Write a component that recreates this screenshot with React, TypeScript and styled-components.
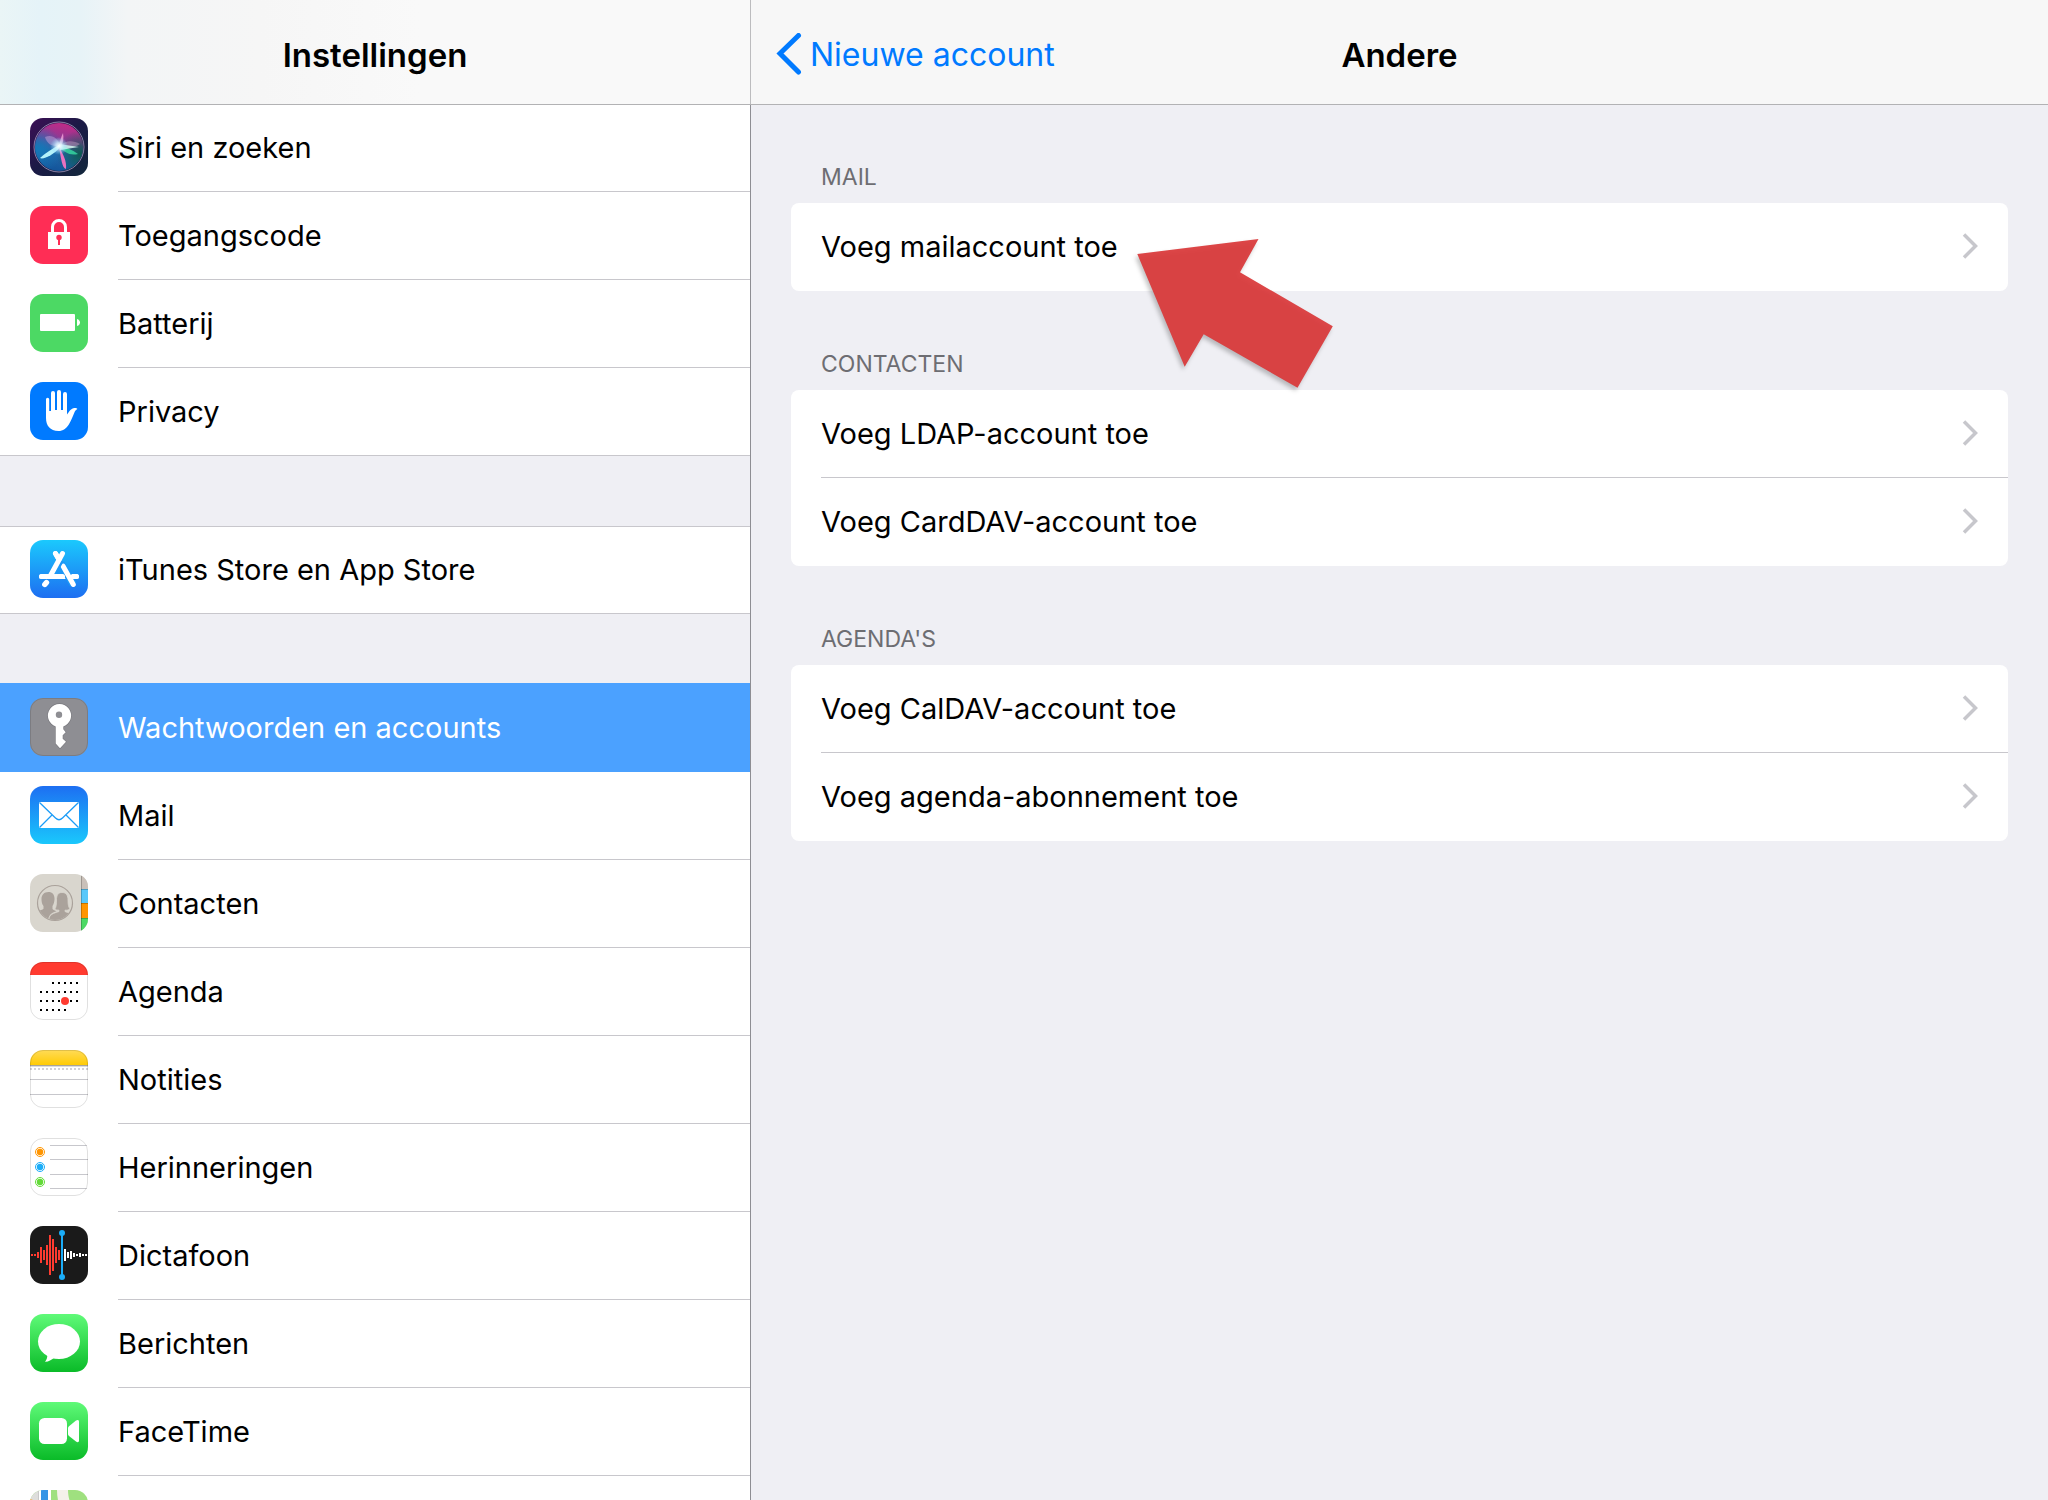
import React from "react";
import styled, { createGlobalStyle, css } from "styled-components";

const GlobalStyle = createGlobalStyle`
  *, *::before, *::after { box-sizing: border-box; }
  body {
    margin: 0;
    background: #efeff4;
    color: #000;
    font-family: Inter, "Liberation Sans", sans-serif;
    font-size: 29px;
    line-height: 36px;
  }
  button { font: inherit; color: inherit; }
  h1, h2, ul { margin: 0; padding: 0; font-weight: inherit; font-size: inherit; }
  ul { list-style: none; }
`;

const Screen = styled.div`
  display: grid;
  grid-template-columns: 751px minmax(0, 1fr);
  height: 100vh;
  overflow: hidden;
`;

const Sidebar = styled.aside`
  display: flex;
  flex-direction: column;
  min-height: 0;
`;

const Main = styled.main`
  display: flex;
  flex-direction: column;
  min-width: 0;
`;

const Bar = styled.header<{ $tinted?: boolean }>`
  position: relative;
  z-index: 1;
  flex: none;
  display: grid;
  grid-template-columns: 1fr auto 1fr;
  align-items: center;
  height: 104px;
  padding: 6px 24px 0;
  box-shadow: 0 1px 0 #b2b2b4;
  background: #f7f7f7;

  ${(p) =>
    p.$tinted &&
    css`
      border-right: 1px solid #bcbcbe;
      background: linear-gradient(90deg, #eaf5f6 0, #e5f3f8 40px, #e7f3f7 80px, #f3f5f6 128px, #f6f6f6 260px, #f9f9f9 420px);
    `}
`;

const Title = styled.h1`
  grid-column: 2;
  font-size: 33px;
  line-height: 40px;
  font-weight: 600;
`;

const BackButton = styled.button`
  justify-self: start;
  display: flex;
  align-items: center;
  gap: 8px;
  padding: 0;
  border: 0;
  background: none;
  color: #007aff;
  font-size: 32px;
  line-height: 40px;
  cursor: pointer;
`;

const SideNav = styled.nav`
  flex: 1;
  min-height: 0;
  overflow: hidden;
  display: flex;
  flex-direction: column;
  gap: 70px;
  border-right: 1px solid #8e8e93;
`;

const SideGroup = styled.ul`
  flex: none;
  background: #fff;
  box-shadow: inset 0 1px 0 #c8c7cc;
`;

const SideLabel = styled.span`
  flex: 1;
  display: flex;
  align-items: center;
  box-shadow: inset 0 -1px 0 #c8c7cc;
`;

const SideRow = styled.button<{ $active?: boolean }>`
  display: flex;
  width: 100%;
  height: 88px;
  padding: 0 0 0 30px;
  gap: 30px;
  border: 0;
  background: none;
  text-align: left;
  cursor: pointer;

  & > svg { flex: none; margin-top: 14px; }

  li:last-child > & {
    box-shadow: inset 0 -1px 0 #c8c7cc;
  }

  ${(p) =>
    p.$active &&
    css`
      background: #4ba1ff;
      color: #fff;
      box-shadow: 0 -1px 0 #4ba1ff;
      ${SideLabel} { box-shadow: none; }
    `}
`;

const Panel = styled.div`
  padding: 0 40px;
`;

const Caption = styled.h2`
  display: flex;
  align-items: flex-end;
  height: 99px;
  padding: 0 30px 12px;
  color: #6d6d72;
  font-size: 23px;
  line-height: 28px;
  text-transform: uppercase;
`;

const Card = styled.ul`
  border-radius: 8px;
  background: #fff;
`;

const CardItem = styled.li`
  position: relative;
  padding-left: 30px;
`;

const CardRow = styled.button`
  display: flex;
  align-items: center;
  justify-content: space-between;
  width: 100%;
  height: 88px;
  padding: 0 30px 0 0;
  border: 0;
  background: none;
  text-align: left;
  cursor: pointer;

  li:not(:last-child) > & {
    box-shadow: inset 0 -1px 0 #c8c7cc;
  }
`;

const Pointer = styled.svg`
  position: absolute;
  left: 339px;
  top: 28px;
  pointer-events: none;
  filter: drop-shadow(-2px 3px 2px rgba(0, 0, 0, 0.25));
`;

function AppIcon({ id, fill, children, outlined }: { id: string; fill: string; outlined?: boolean; children: React.ReactNode }) {
  return (
    <svg width="58" height="58" viewBox="0 0 58 58" aria-hidden="true">
      <clipPath id={`${id}-clip`}>
        <rect width="58" height="58" rx="13" />
      </clipPath>
      <g clipPath={`url(#${id}-clip)`}>
        <rect width="58" height="58" fill={fill} />
        {children}
      </g>
      {outlined && <rect x=".5" y=".5" width="57" height="57" rx="12.5" fill="none" stroke="#000" strokeOpacity=".12" />}
    </svg>
  );
}

function Fade({ id, from, to }: { id: string; from: string; to: string }) {
  return (
    <linearGradient id={id} x1="0" y1="0" x2="0" y2="1">
      <stop offset="0" stopColor={from} />
      <stop offset="1" stopColor={to} />
    </linearGradient>
  );
}

const SiriIcon = () => (
  <AppIcon id="siri" fill="url(#siri-bg)">
    <defs>
      <linearGradient id="siri-bg" x1="0" y1="0" x2="1" y2="1">
        <stop offset="0" stopColor="#3c0f55" />
        <stop offset=".5" stopColor="#1a1a45" />
        <stop offset="1" stopColor="#12283c" />
      </linearGradient>
      <linearGradient id="siri-orb" x1=".6" y1="0" x2=".4" y2="1">
        <stop offset="0" stopColor="#c22a86" />
        <stop offset=".35" stopColor="#8a3a95" />
        <stop offset=".6" stopColor="#2467a8" />
        <stop offset="1" stopColor="#12549a" />
      </linearGradient>
      <radialGradient id="siri-green" cx=".95" cy=".65" r=".5">
        <stop offset="0" stopColor="#0d5a50" />
        <stop offset="1" stopColor="#0d5a50" stopOpacity="0" />
      </radialGradient>
      <radialGradient id="siri-blue" cx=".08" cy=".55" r=".5">
        <stop offset="0" stopColor="#1478b8" />
        <stop offset="1" stopColor="#1478b8" stopOpacity="0" />
      </radialGradient>
      <radialGradient id="siri-glow">
        <stop offset="0" stopColor="#fff" />
        <stop offset=".35" stopColor="#d6f4ff" stopOpacity=".8" />
        <stop offset="1" stopColor="#7fd4ff" stopOpacity="0" />
      </radialGradient>
    </defs>
    <circle cx="29" cy="29" r="24" fill="url(#siri-orb)" />
    <circle cx="29" cy="29" r="24" fill="url(#siri-green)" />
    <circle cx="29" cy="29" r="24" fill="url(#siri-blue)" />
    <path d="M15 19c7-3 13 1 15 9-8 1-13-2-15-9z" fill="#c6a4dc" opacity=".5" />
    <path d="M30 28c5-6 13-6 20-2-5 4-13 5-20 2z" fill="#b78fb8" opacity=".55" />
    <path d="M29 28c1-5 2-9 4-13 1 5 0 10-2 14z" fill="#f6a8dc" opacity=".8" />
    <path d="M29 28c7 1 14 4 19 8-8 2-15-2-19-8z" fill="#35d6a0" opacity=".85" />
    <path d="M29 27c-7 4-14 8-19 13 3 2 14-3 20-11z" fill="#b4f1fa" />
    <path d="M29 29c4 7 8 14 7 22-4-1-5-11-7-22z" fill="#e972c0" />
    <path d="M29 26l20 3-19 3z" fill="#d7fff4" opacity=".8" />
    <circle cx="29" cy="28" r="9" fill="url(#siri-glow)" />
    <circle cx="29" cy="29" r="25" fill="none" stroke="#b9a9cf" strokeOpacity=".7" />
  </AppIcon>
);

const LockIcon = () => (
  <AppIcon id="lock" fill="#ff2d55">
    <path d="M22.500 27v-6a6.500 6.500 0 0 1 13 0v6" fill="none" stroke="#fff" strokeWidth="3" />
    <rect x="18" y="26" width="22" height="17" fill="#fff" />
    <circle cx="29" cy="31.500" r="2.700" fill="#ff2d55" />
    <rect x="28" y="32" width="2" height="7" fill="#ff2d55" />
  </AppIcon>
);

const BatteryIcon = () => (
  <AppIcon id="battery" fill="#4cd964">
    <rect x="10" y="20" width="35" height="17" rx="1" fill="#fff" />
    <path d="M47 25c4 1 4 6 0 7z" fill="#fff" />
  </AppIcon>
);

const HandIcon = () => (
  <AppIcon id="hand" fill="#007aff">
    <path
      fill="#fff"
      d="M16 17.300a1.600 1.600 0 0 1 3.200 0V29h1.800V11a2 2 0 0 1 4 0v17h2V10a2 2 0 0 1 4 0v18h2V12a2 2 0 0 1 4 0v20.500c2-2.500 4-6.500 7.500-6.500 1.500 0 3 .5 2.900 1-1.500.8-2.400 2-3.100 3.700C41 38 38 49 28.500 49 20 49 16 43.500 16 36z"
    />
  </AppIcon>
);

const AppStoreIcon = () => (
  <AppIcon id="store" fill="url(#store-bg)">
    <defs>
      <Fade id="store-bg" from="#1bc9fd" to="#1d6ef1" />
    </defs>
    <g fill="none" stroke="#fff" strokeWidth="5" strokeLinecap="round">
      <path d="M11.500 36.500h35" />
      <path d="M25.500 13.500L29 19.500" />
      <path d="M16.500 42.500L14.800 44.500" strokeWidth="5.400" />
      <path d="M31 23.500L43.300 44.500" stroke="#1c98f7" strokeWidth="7.500" strokeLinecap="butt" />
      <path d="M43 36.500h3.500M33 26L43.300 44.500" />
      <path d="M30.500 20L22.500 34" stroke="#1c98f7" strokeWidth="7" strokeLinecap="butt" />
      <path d="M25.500 13.500L29 19.500M32.500 13.500L20.500 35.500" />
      <path d="M11.500 36.500h21" />
    </g>
  </AppIcon>
);

const KeyIcon = () => (
  <AppIcon id="key" fill="#8e8e93" outlined>
    <g fill="#fff" stroke="#7b7b80" strokeWidth="1.200" paintOrder="stroke">
      <path d="M25.700 28.500v17l4.300 4.800 6-6.500-3.300-3v-3.500l3-3-2.400-3v-2.800a11.600 11.600 0 1 0-7.600 0z" />
    </g>
    <circle cx="29" cy="16.700" r="3.200" fill="#8e8e93" />
  </AppIcon>
);

const MailIcon = () => (
  <AppIcon id="mail" fill="url(#mail-bg)">
    <defs>
      <Fade id="mail-bg" from="#1d6ff2" to="#1ac8fc" />
    </defs>
    <rect x="9" y="16" width="40" height="26" rx="1" fill="#fff" />
    <path
      d="M9.500 16.500L25.500 32q3.500 3.400 7 0L48.500 16.500M9.500 41.500L22 29M48.500 41.500L36 29"
      fill="none"
      stroke="#1b9cf7"
      strokeWidth="1.300"
    />
  </AppIcon>
);

const ContactsIcon = () => (
  <AppIcon id="contacts" fill="#d9d6ce">
    <clipPath id="contacts-disc">
      <circle cx="25" cy="29" r="17" />
    </clipPath>
    <circle cx="25" cy="29" r="17.500" fill="none" stroke="#aaa29b" strokeWidth="1.200" />
    <g clipPath="url(#contacts-disc)" fill="#aaa29b">
      <path d="M18.500 18c4 0 6.300 3 6 7.500-.2 3-1 5-2 6.500v3c1 1.300 2.500 1.500 4 2.300-4 1.200-7.500 3-8 7.700v4L4 44v-6c3-1.500 8-1.500 9.500-3.300V32c-1.300-1.500-2-4-2-6.500C11.300 21 14 18 18.500 18z" />
      <path d="M32 18.500c4.500 0 6 3.500 6 7.500 0 4 .3 7 2 9-1.200 1-3 1.200-5 1.200v1.300c3 1.500 7 2 9 3.500v9H19v-5c.5-4.500 4-5.500 10-7.500v-1.300c-1.500 0-3-.2-4.200-1 1.500-2 1.700-5.200 1.700-9.200 0-4.500 1.500-7.500 5.500-7.500z" stroke="#d9d6ce" strokeWidth=".8" />
    </g>
    <rect x="51" width="7" height="15" fill="#c9c0b9" />
    <rect x="51" y="15" width="7" height="14" fill="#5ac8fa" />
    <rect x="51" y="29" width="7" height="15" fill="#ff9500" />
    <rect x="51" y="44" width="7" height="14" fill="#4cd964" />
    <path d="M51 15.500h7M51 29.500h7M51 44.500h7M51.500 0v58" stroke="#000" strokeOpacity=".22" />
  </AppIcon>
);

const CALENDAR_ROWS = [
  { y: 20, first: 2, last: 6 },
  { y: 29, first: 0, last: 6 },
  { y: 38, first: 0, last: 6 },
  { y: 47, first: 0, last: 4 },
];

const CalendarIcon = () => (
  <AppIcon id="calendar" fill="#fff" outlined>
    <rect width="58" height="13" fill="#ff3b30" />
    {CALENDAR_ROWS.map(({ y, first, last }) =>
      Array.from({ length: last - first + 1 }, (_, i) => (
        <rect key={`${y}-${i}`} x={10 + (first + i) * 6} y={y} width="2" height="2" />
      ))
    )}
    <circle cx="35" cy="39" r="4" fill="#ff3b30" />
  </AppIcon>
);

const NotesIcon = () => (
  <AppIcon id="notes" fill="#fff" outlined>
    <defs>
      <Fade id="notes-head" from="#ffdb57" to="#ffcb05" />
    </defs>
    <rect width="58" height="15" fill="url(#notes-head)" />
    <path d="M0 15.500h58" stroke="#a8a59a" />
    <path d="M0 16.500h58" stroke="#dcdcdc" />
    <path d="M0 19h58" stroke="#d2d2d6" strokeWidth="2" strokeDasharray="2 2" />
    <path d="M0 29.500h58M0 44.500h58" stroke="#c7c7cc" />
  </AppIcon>
);

const RemindersIcon = () => (
  <AppIcon id="reminders" fill="#fff" outlined>
    {["#ff9500", "#1badf8", "#63da38"].map((color, i) => (
      <g key={color}>
        <circle cx="10" cy={14 + i * 15} r="4.500" fill="none" stroke={color} />
        <circle cx="10" cy={14 + i * 15} r="3.200" fill={color} />
      </g>
    ))}
    <path d="M20 7.500h38M20 21.500h38M20 36.500h38M20 50.500h38" stroke="#c7c7cc" />
  </AppIcon>
);

const WAVE = [2, 2, 6, 16, 10, 20, 40, 32, 16, 10, 0, 12, 6, 8, 4, 2, 4, 2, 2];

const VoiceIcon = () => (
  <AppIcon id="voice" fill="#1a1a1a">
    {WAVE.map((h, i) => (
      <rect key={i} x={1 + i * 3} y={29 - h / 2} width="2" height={h} fill={i < 10 ? "#ff3b30" : "#fff"} />
    ))}
    <path d="M32 7v44" stroke="#1badf8" strokeWidth="2" />
    <circle cx="32" cy="7" r="3" fill="#1badf8" />
    <circle cx="32" cy="51" r="3" fill="#1badf8" />
  </AppIcon>
);

const MessagesIcon = () => (
  <AppIcon id="messages" fill="url(#messages-bg)">
    <defs>
      <Fade id="messages-bg" from="#5ffa78" to="#0abb28" />
    </defs>
    <ellipse cx="29" cy="27.500" rx="21" ry="17.500" fill="#fff" />
    <path d="M17 40c1 3-.5 6-2 7.700 3 .3 6.500-1.700 9-3.700z" fill="#fff" />
  </AppIcon>
);

const FaceTimeIcon = () => (
  <AppIcon id="facetime" fill="url(#facetime-bg)">
    <defs>
      <Fade id="facetime-bg" from="#5ffa78" to="#0abb28" />
    </defs>
    <rect x="9" y="16" width="28" height="26" rx="5.500" fill="#fff" />
    <path d="M38 26.500c0-1 .3-1.600 1-2.200l7-5.700c1.500-1.200 3-.8 3 1v19c0 1.800-1.500 2.200-3 1l-7-5.700c-.7-.6-1-1.200-1-2.200z" fill="#fff" />
  </AppIcon>
);

const MapsIcon = () => (
  <AppIcon id="maps" fill="#9fe07f">
    <path d="M0 0h8v58H0z" fill="#dededc" />
    <path d="M0 9l3 1v48H0z" fill="#ff9f2e" />
    <path d="M8 0h13v58H8z" fill="#fff" />
    <path d="M11 0h7v58h-7z" fill="#3595e6" />
    <path d="M27 0h11c0 14 8 26 20 32v12C38 38 27 20 27 0z" fill="#f4f1ea" />
    <path d="M8.500 0v58" stroke="#c9c9c9" />
  </AppIcon>
);

type SideItem = { label?: string; name?: string; Icon: React.FC; active?: boolean };

const GROUPS: SideItem[][] = [
  [
    { label: "Siri en zoeken", Icon: SiriIcon },
    { label: "Toegangscode", Icon: LockIcon },
    { label: "Batterij", Icon: BatteryIcon },
    { label: "Privacy", Icon: HandIcon },
  ],
  [{ label: "iTunes Store en App Store", Icon: AppStoreIcon }],
  [
    { label: "Wachtwoorden en accounts", Icon: KeyIcon, active: true },
    { label: "Mail", Icon: MailIcon },
    { label: "Contacten", Icon: ContactsIcon },
    { label: "Agenda", Icon: CalendarIcon },
    { label: "Notities", Icon: NotesIcon },
    { label: "Herinneringen", Icon: RemindersIcon },
    { label: "Dictafoon", Icon: VoiceIcon },
    { label: "Berichten", Icon: MessagesIcon },
    { label: "FaceTime", Icon: FaceTimeIcon },
    { name: "Kaarten", Icon: MapsIcon },
  ],
];

const SECTIONS = [
  { title: "Mail", rows: ["Voeg mailaccount toe"], pointed: true },
  { title: "Contacten", rows: ["Voeg LDAP-account toe", "Voeg CardDAV-account toe"] },
  { title: "Agenda's", rows: ["Voeg CalDAV-account toe", "Voeg agenda-abonnement toe"] },
];

const Chevron = () => (
  <svg width="16" height="28" viewBox="0 0 16 28" aria-hidden="true">
    <path d="M2 1.500L13.500 13 2 24.500" fill="none" stroke="#c7c7cc" strokeWidth="3.500" />
  </svg>
);

const BackChevron = () => (
  <svg width="27" height="44" viewBox="0 0 27 44" aria-hidden="true">
    <path d="M23.500 2.500L5 20.500l18.500 18.500" fill="none" stroke="#007aff" strokeWidth="5" strokeLinecap="round" />
  </svg>
);

const RedArrow = () => (
  <Pointer width="212" height="168" viewBox="0 0 212 168" aria-hidden="true">
    <path d="M7.300 23L128.500 8 110 41.300l92.800 54-35.300 61.400-93.800-53.400-19 32.400z" fill="#d93839" fillOpacity=".93" />
  </Pointer>
);

export default function App() {
  return (
    <>
      <GlobalStyle />
      <Screen>
        <Sidebar>
          <Bar $tinted>
            <Title>Instellingen</Title>
          </Bar>
          <SideNav aria-label="Instellingen">
            {GROUPS.map((items, g) => (
              <SideGroup key={g}>
                {items.map(({ label, name, Icon, active }, i) => (
                  <li key={i}>
                    <SideRow type="button" $active={active} aria-label={name} aria-current={active ? "page" : undefined}>
                      <Icon />
                      <SideLabel>{label}</SideLabel>
                    </SideRow>
                  </li>
                ))}
              </SideGroup>
            ))}
          </SideNav>
        </Sidebar>
        <Main>
          <Bar>
            <BackButton type="button">
              <BackChevron />
              Nieuwe account
            </BackButton>
            <Title>Andere</Title>
          </Bar>
          <Panel>
            {SECTIONS.map(({ title, rows, pointed }) => (
              <section key={title}>
                <Caption>{title}</Caption>
                <Card>
                  {rows.map((row) => (
                    <CardItem key={row}>
                      <CardRow type="button">
                        {row}
                        <Chevron />
                      </CardRow>
                      {pointed && <RedArrow />}
                    </CardItem>
                  ))}
                </Card>
              </section>
            ))}
          </Panel>
        </Main>
      </Screen>
    </>
  );
}
